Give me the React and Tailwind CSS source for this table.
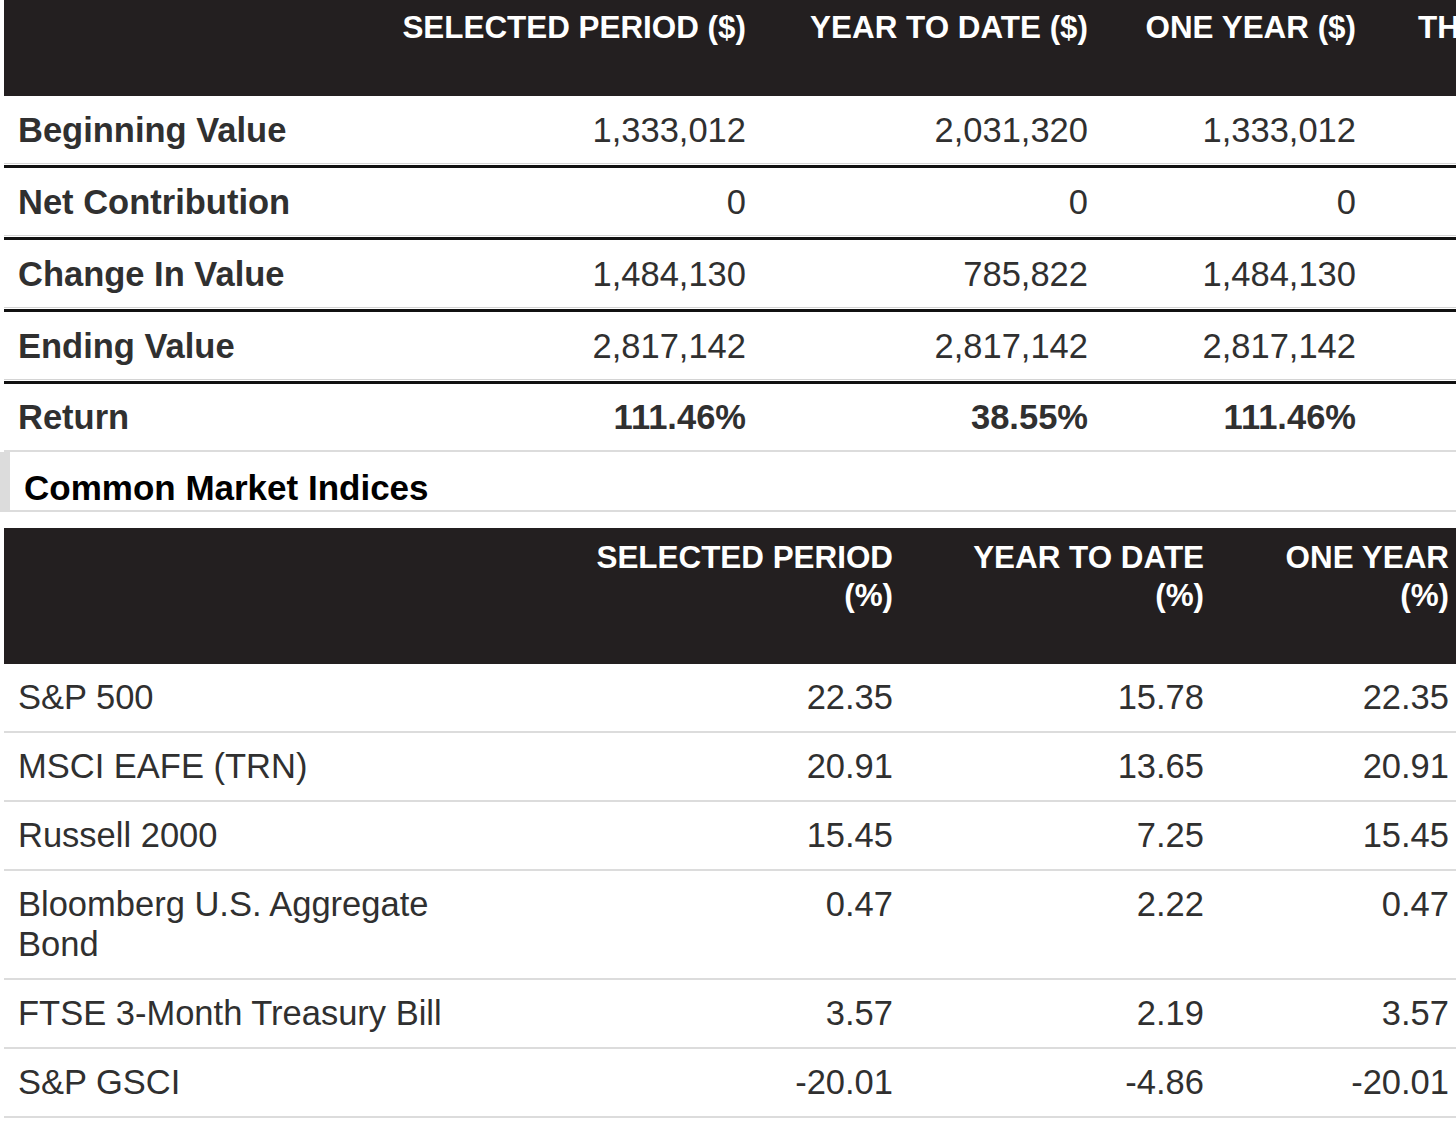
import React from "react";

const font = { fontFamily: '"Liberation Sans", Arial, Helvetica, sans-serif' };

const summaryRows = [
  { label: "Beginning Value", values: ["1,333,012", "2,031,320", "1,333,012"] },
  { label: "Net Contribution", values: ["0", "0", "0"] },
  { label: "Change In Value", values: ["1,484,130", "785,822", "1,484,130"] },
  { label: "Ending Value", values: ["2,817,142", "2,817,142", "2,817,142"] },
  { label: "Return", values: ["111.46%", "38.55%", "111.46%"], bold: true },
];

const indexRows = [
  { label: "S&P 500", values: ["22.35", "15.78", "22.35"] },
  { label: "MSCI EAFE (TRN)", values: ["20.91", "13.65", "20.91"] },
  { label: "Russell 2000", values: ["15.45", "7.25", "15.45"] },
  {
    label: (
      <>
        Bloomberg U.S. Aggregate
        <br />
        Bond
      </>
    ),
    values: ["0.47", "2.22", "0.47"],
  },
  { label: "FTSE 3-Month Treasury Bill", values: ["3.57", "2.19", "3.57"] },
  { label: "S&P GSCI", values: ["-20.01", "-4.86", "-20.01"] },
];

function SummaryRow({ row, first, last }) {
  return (
    <div className={first ? "" : "mt-px border-t-[3px] border-[#111]"}>
      <div
        className={
          "flex h-[68px] items-center text-[34.5px] leading-[40px] text-[#303030] " +
          (last ? "border-b-2 border-[#dcdcdc]" : "border-b border-[#d4d4d4]")
        }
      >
        <div className="w-[396px] shrink-0 pl-[14px] font-bold whitespace-nowrap">
          {row.label}
        </div>
        <div className={"w-[362px] shrink-0 pr-[16px] text-right " + (row.bold ? "font-bold" : "")}>
          {row.values[0]}
        </div>
        <div className={"w-[342px] shrink-0 pr-[16px] text-right " + (row.bold ? "font-bold" : "")}>
          {row.values[1]}
        </div>
        <div className={"w-[268px] shrink-0 pr-[16px] text-right " + (row.bold ? "font-bold" : "")}>
          {row.values[2]}
        </div>
        <div className="flex-1" />
      </div>
    </div>
  );
}

function IndexRow({ row }) {
  return (
    <div className="flex border-b-2 border-[#dcdcdc] pt-[13px] pb-[14px] text-[34.5px] leading-[40px] text-[#303030]">
      <div className="w-[556px] shrink-0 pl-[14px]">{row.label}</div>
      <div className="w-[349px] shrink-0 pr-[16px] text-right">{row.values[0]}</div>
      <div className="w-[311px] shrink-0 pr-[16px] text-right">{row.values[1]}</div>
      <div className="w-[236px] shrink-0 pr-[7px] text-right">{row.values[2]}</div>
    </div>
  );
}

export default function App() {
  return (
    <div className="h-[1128px] w-[1456px] overflow-hidden bg-white" style={font}>
      {/* account summary */}
      <div className="ml-1">
        <div className="flex h-[96px] overflow-hidden bg-[#231f20] pt-[9px] text-[31.4px] leading-[38px] font-bold text-white whitespace-nowrap">
          <div className="w-[396px] shrink-0" />
          <div className="w-[362px] shrink-0 pr-[16px] text-right">SELECTED PERIOD ($)</div>
          <div className="w-[342px] shrink-0 pr-[16px] text-right">YEAR TO DATE ($)</div>
          <div className="w-[268px] shrink-0 pr-[16px] text-right">ONE YEAR ($)</div>
          <div className="shrink-0 pl-[46px]">THREE YEAR ($)</div>
        </div>
        {summaryRows.map((row, i) => (
          <SummaryRow
            key={i}
            row={row}
            first={i === 0}
            last={i === summaryRows.length - 1}
          />
        ))}
      </div>

      {/* section title */}
      <div className="h-[60px] border-b-2 border-l-[10px] border-[#dcdcdc] pt-[16px] pl-[14px] text-[35px] leading-[40px] font-bold text-black">
        Common Market Indices
      </div>

      {/* market indices */}
      <div className="mt-[16px] ml-1">
        <div className="flex h-[136px] bg-[#231f20] pt-[11px] text-[31.4px] leading-[38px] font-bold text-white whitespace-nowrap">
          <div className="w-[556px] shrink-0" />
          <div className="w-[349px] shrink-0 pr-[16px] text-right">
            SELECTED PERIOD
            <br />
            (%)
          </div>
          <div className="w-[311px] shrink-0 pr-[16px] text-right">
            YEAR TO DATE
            <br />
            (%)
          </div>
          <div className="w-[236px] shrink-0 pr-[7px] text-right">
            ONE YEAR
            <br />
            (%)
          </div>
        </div>
        {indexRows.map((row, i) => (
          <IndexRow key={i} row={row} />
        ))}
      </div>
    </div>
  );
}
